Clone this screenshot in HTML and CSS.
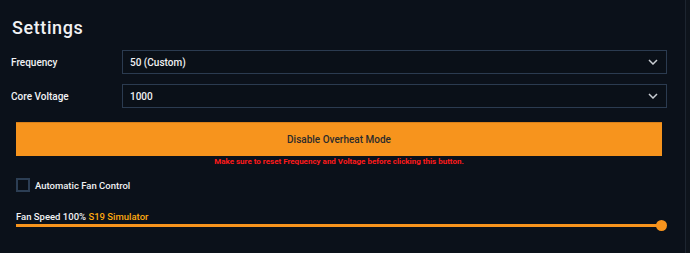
FILE: index.html
```html
<!DOCTYPE html>
<html lang="en">
<head>
<meta charset="utf-8">
<title>Settings</title>
<link rel="stylesheet" href="styles.css">
</head>
<body>
<div class="app">
  <main class="panel">
    <h1 class="title">Settings</h1>
    <div class="form-grid">
      <label class="field-label">Frequency</label>
      <div class="select">
        <span class="select-value">50 (Custom)</span>
        <svg class="chevron" width="10" height="6" viewBox="0 0 10 6"><path d="M1 1 L5 5 L9 1" fill="none" stroke="#c9cdd3" stroke-width="1.5"/></svg>
      </div>
      <label class="field-label">Core Voltage</label>
      <div class="select">
        <span class="select-value">1000</span>
        <svg class="chevron" width="10" height="6" viewBox="0 0 10 6"><path d="M1 1 L5 5 L9 1" fill="none" stroke="#c9cdd3" stroke-width="1.5"/></svg>
      </div>
    </div>
    <div class="inset">
      <button class="btn-primary">Disable Overheat Mode</button>
      <p class="warning">Make sure to reset Frequency and Voltage before clicking this button.</p>
      <div class="check-row">
        <span class="checkbox"></span>
        <span class="check-label">Automatic Fan Control</span>
      </div>
      <div class="fan-label">Fan Speed 100% <span class="accent">S19 Simulator</span></div>
      <div class="slider">
        <div class="slider-track"></div>
        <div class="slider-thumb"></div>
      </div>
    </div>
  </main>
  <div class="scrollbar"></div>
</div>
</body>
</html>
```

FILE: styles.css
```css
* { box-sizing: border-box; }
html, body { margin: 0; padding: 0; }
body {
  background: #0b111a;
  color: #f1f2f4;
  font-family: "Roboto", "Liberation Sans", sans-serif;
  width: 690px;
  height: 253px;
  overflow: hidden;
}
.app {
  display: flex;
  height: 253px;
}
.panel {
  flex: 1;
  padding: 17px 18px 0 11px;
}
.scrollbar {
  width: 5px;
  background: #0e141c;
  border-left: 1px solid #1d2530;
}
.title {
  margin: 0 0 11px 0;
  font-size: 18px;
  line-height: 22px;
  font-weight: 500;
  letter-spacing: 0.6px;
  padding-left: 1px;
}
.form-grid {
  display: grid;
  grid-template-columns: 111px 1fr;
  row-gap: 10px;
  align-items: center;
}
.field-label {
  font-size: 10px;
  font-weight: 500;
}
.select {
  height: 24px;
  border: 1px solid #2b3b50;
  background: #0a1018;
  display: flex;
  align-items: center;
  justify-content: space-between;
  padding: 0 7px 0 7px;
}
.select-value {
  font-size: 10px;
  font-weight: 500;
}
.chevron { display: block; margin-right: 1px; }
.inset {
  margin: 14px 5px 0 5px;
}
.btn-primary {
  display: block;
  width: 100%;
  height: 34px;
  border: 0;
  border-top: 1px solid #d9801a;
  background: #f7941d;
  color: #2b2b2b;
  font-family: "Roboto", "Liberation Sans", sans-serif;
  font-size: 10px;
  font-weight: 500;
  padding: 0;
}
.warning {
  margin: 1px 0 0 0;
  text-align: center;
  color: #ff1a1a;
  font-size: 8px;
  font-weight: 700;
  line-height: 10px;
}
.check-row {
  margin-top: 11px;
  display: flex;
  align-items: center;
  gap: 5px;
  height: 14px;
}
.checkbox {
  width: 14px;
  height: 14px;
  border: 2px solid #2c3e54;
  background: #0a1018;
}
.check-label {
  font-size: 9.5px;
  font-weight: 500;
}
.fan-label {
  margin-top: 19px;
  font-size: 9.5px;
  font-weight: 500;
  line-height: 12px;
}
.accent { color: #ffaa10; }
.slider {
  margin-top: -3px;
  height: 11px;
  position: relative;
  display: flex;
  align-items: center;
}
.slider-track {
  flex: 1;
  height: 3px;
  background: #f7941d;
}
.slider-thumb {
  position: absolute;
  right: -5px;
  top: 0;
  width: 11px;
  height: 11px;
  border-radius: 50%;
  background: #f7941d;
}
```
